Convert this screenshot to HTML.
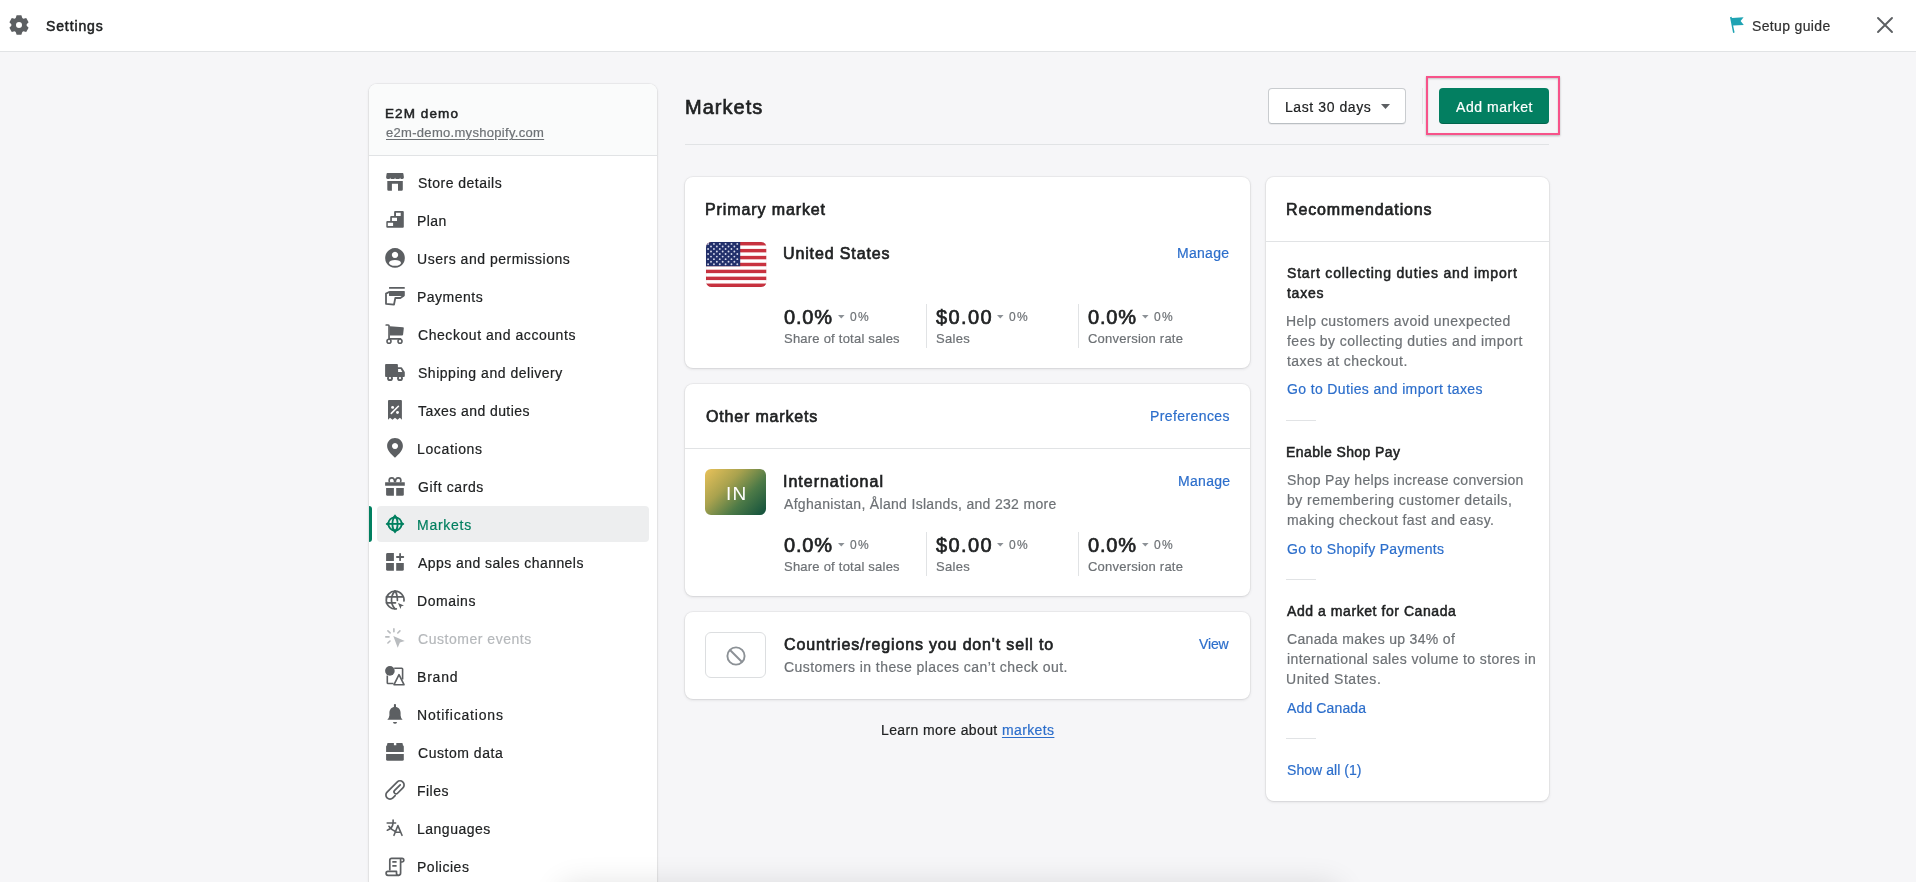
<!DOCTYPE html>
<html><head><meta charset="utf-8"><title>Settings - Markets</title>
<style>
html,body{margin:0;padding:0}
body{width:1916px;height:882px;overflow:hidden;position:relative;background:#f6f6f8;font-family:"Liberation Sans",sans-serif;color:#202223}
.t{position:absolute;will-change:transform;white-space:nowrap;line-height:40px;font-family:"Liberation Sans",sans-serif}
svg{position:absolute;overflow:visible}
.card{position:absolute;background:#fff;border-radius:8px;box-shadow:0 0 0 1px rgba(63,63,68,0.05),0 1px 3px 0 rgba(63,63,68,0.15)}
</style></head><body>
<div style="position:absolute;left:0px;top:0px;width:1916px;height:51px;background:#fff"></div>
<div style="position:absolute;left:0px;top:51px;width:1916px;height:1px;background:#e1e3e5"></div>
<svg style="left:9.3px;top:15px" width="20" height="20" viewBox="0 0 20 20"><path fill="#5c5f62" fill-rule="evenodd" d="M13.29 3.04 L12.38 0.29 L7.62 0.29 L6.71 3.04 L5.62 3.67 L2.78 3.08 L0.40 7.20 L2.33 9.37 L2.33 10.63 L0.40 12.80 L2.78 16.92 L5.62 16.33 L6.71 16.96 L7.62 19.71 L12.38 19.71 L13.29 16.96 L14.38 16.33 L17.22 16.92 L19.60 12.80 L17.67 10.63 L17.67 9.37 L19.60 7.20 L17.22 3.08 L14.38 3.67 Z M13.0 10 A3.0 3.0 0 1 0 7.0 10 A3.0 3.0 0 1 0 13.0 10 Z"/></svg>
<div class="t" style="left:45.70px;top:6px;font-size:14px;font-weight:normal;color:#202223;letter-spacing:0.873px;-webkit-text-stroke:0.50px #202223;">Settings</div>
<svg style="left:1729px;top:16px" width="16" height="18" viewBox="0 0 16 18"><path fill="#1ea3b3" d="M1 1.2 L2.6 0.8 L2.9 2 L14.6 1.2 L11.6 5 L14.8 9 L4.1 9.6 L5.6 16.6 L4.1 16.9 Z"/></svg>
<div class="t" style="left:1752.20px;top:6px;font-size:14px;font-weight:normal;color:#303030;letter-spacing:0.346px;-webkit-text-stroke:0.20px #303030;">Setup guide</div>
<svg style="left:1877px;top:17px" width="16" height="16" viewBox="0 0 16 16"><path d="M1 1 L15 15 M15 1 L1 15" stroke="#5c5f62" stroke-width="1.9" stroke-linecap="round"/></svg>
<div class="card" style="left:369px;top:84px;width:288px;height:830px;border-radius:8px"></div>
<div style="position:absolute;left:369px;top:84px;width:288px;height:71px;background:#fafbfb;border-radius:8px 8px 0 0"></div>
<div style="position:absolute;left:369px;top:155px;width:288px;height:1px;background:#e1e3e5"></div>
<div class="t" style="left:384.60px;top:94px;font-size:13.5px;font-weight:normal;color:#202223;letter-spacing:1.090px;-webkit-text-stroke:0.50px #202223;">E2M demo</div>
<div class="t" style="left:385.60px;top:113px;font-size:13px;font-weight:normal;color:#6d7175;letter-spacing:0.303px;-webkit-text-stroke:0.20px #6d7175;text-decoration:underline;text-underline-offset:2px">e2m-demo.myshopify.com</div>
<div style="position:absolute;left:377px;top:506px;width:272px;height:36px;background:#edeeef;border-radius:4px"></div>
<div style="position:absolute;left:369px;top:506px;width:3px;height:36px;background:#007f5f;border-radius:0 3px 3px 0"></div>
<div class="t" style="left:417.70px;top:163px;font-size:14px;font-weight:normal;color:#202223;letter-spacing:0.490px;-webkit-text-stroke:0.20px #202223;">Store details</div>
<svg style="left:385px;top:172px" width="20" height="20" viewBox="0 0 20 20"><g fill="#5c5f62"><path d="M2.3 1.1 H17.7 Q18.3 1.1 18.4 1.7 L18.9 5.2 Q18.9 6.9 17.5 6.9 H16.4 Q15.1 6.9 15.1 5.4 Q15.1 6.9 13.7 6.9 H11.4 Q10.05 6.9 10.05 5.4 Q10.05 6.9 8.7 6.9 H6.5 Q5.2 6.9 5.2 5.4 Q5.2 6.9 3.8 6.9 H2.5 Q1.1 6.9 1.1 5.2 L1.6 1.7 Q1.7 1.1 2.3 1.1 Z"/><path d="M2.3 9.1 H17.8 V17.6 Q17.8 18.8 16.6 18.8 H13 V11.8 H6.9 V18.8 H3.5 Q2.3 18.8 2.3 17.6 Z"/></g></svg>
<div class="t" style="left:416.70px;top:201px;font-size:14px;font-weight:normal;color:#202223;letter-spacing:0.422px;-webkit-text-stroke:0.20px #202223;">Plan</div>
<svg style="left:385px;top:210px" width="20" height="20" viewBox="0 0 20 20"><path fill="#5c5f62" fill-rule="evenodd" d="M10.1 1.1 H17.8 Q18.8 1.1 18.8 2.1 V16.8 Q18.8 17.8 17.8 17.8 H2.3 Q1.3 17.8 1.3 16.8 V12.1 Q1.3 11.1 2.3 11.1 H5.2 V7 Q5.2 6 6.2 6 H9.1 V2.1 Q9.1 1.1 10.1 1.1 Z M11 2.8 V6 H15.7 V2.8 Z M6.9 7.7 V11 H12 V7.7 Z M2.8 12.8 V16.1 H8.1 V12.8 Z"/></svg>
<div class="t" style="left:416.70px;top:239px;font-size:14px;font-weight:normal;color:#202223;letter-spacing:0.521px;-webkit-text-stroke:0.20px #202223;">Users and permissions</div>
<svg style="left:385px;top:248px" width="20" height="20" viewBox="0 0 20 20"><path fill="#5c5f62" fill-rule="evenodd" d="M10 0.1 A9.85 9.85 0 1 1 9.99 0.1 Z M10 3.8 A3.1 3.1 0 1 0 10.01 3.8 Z M4 14.9 A6 2.9 0 1 0 16 14.9 A6 2.9 0 1 0 4 14.9 Z"/></svg>
<div class="t" style="left:416.70px;top:277px;font-size:14px;font-weight:normal;color:#202223;letter-spacing:0.493px;-webkit-text-stroke:0.20px #202223;">Payments</div>
<svg style="left:385px;top:286px" width="20" height="20" viewBox="0 0 20 20"><g fill="#5c5f62"><rect x="4" y="1.1" width="15.8" height="1.7" rx="0.5"/><rect x="4" y="5" width="15.8" height="4.9" rx="0.4"/></g><path d="M4.6 5.8 L1 7.6 V17.8 L9 18.7 L10.3 12 H15.4 L19 9.6" fill="none" stroke="#5c5f62" stroke-width="1.8" stroke-linejoin="round"/></svg>
<div class="t" style="left:417.70px;top:315px;font-size:14px;font-weight:normal;color:#202223;letter-spacing:0.554px;-webkit-text-stroke:0.20px #202223;">Checkout and accounts</div>
<svg style="left:385px;top:324px" width="20" height="20" viewBox="0 0 20 20"><g fill="#5c5f62"><path d="M4.9 2.3 L18 3.2 Q18.9 3.3 18.8 4.2 L18.1 10.6 Q18 11.6 17 11.6 H4.9 Z"/></g><path d="M1.2 1 H3.2 Q4.05 1 4.05 1.9 V14.85 H15.5" fill="none" stroke="#5c5f62" stroke-width="1.7" stroke-linecap="round" stroke-linejoin="round"/><circle cx="4" cy="17.2" r="2" fill="none" stroke="#5c5f62" stroke-width="1.6"/><circle cx="15" cy="17.2" r="2" fill="none" stroke="#5c5f62" stroke-width="1.6"/></svg>
<div class="t" style="left:417.70px;top:353px;font-size:14px;font-weight:normal;color:#202223;letter-spacing:0.522px;-webkit-text-stroke:0.20px #202223;">Shipping and delivery</div>
<svg style="left:385px;top:362px" width="20" height="20" viewBox="0 0 20 20"><path fill="#5c5f62" fill-rule="evenodd" d="M1 2.1 H12 Q12.9 2.1 12.9 3 V5.2 H16.3 Q16.8 5.2 17.1 5.7 L19.6 9.8 Q19.8 10.1 19.8 10.5 V14.1 Q19.8 15 18.9 15 H1 Q0.1 15 0.1 14.1 V3 Q0.1 2.1 1 2.1 Z M13.1 6.9 V10.1 H17.3 L15.7 6.9 Z"/><circle cx="5" cy="16.2" r="2.9" fill="#5c5f62"/><circle cx="15" cy="16.2" r="2.9" fill="#5c5f62"/><circle cx="5" cy="16.1" r="1.15" fill="#fff"/><circle cx="15" cy="16.1" r="1.15" fill="#fff"/></svg>
<div class="t" style="left:417.70px;top:391px;font-size:14px;font-weight:normal;color:#202223;letter-spacing:0.422px;-webkit-text-stroke:0.20px #202223;">Taxes and duties</div>
<svg style="left:385px;top:400px" width="20" height="20" viewBox="0 0 20 20"><path fill="#5c5f62" d="M4 0.1 H15.9 Q16.9 0.1 16.9 1.1 V19.8 L14.9 17.8 L12.5 19.8 L10 17.8 L7.5 19.8 L5 17.8 L3 19.8 V1.1 Q3 0.1 4 0.1 Z"/><g fill="#fff"><circle cx="7.6" cy="7.4" r="1.45"/><circle cx="12.5" cy="12.5" r="1.45"/></g><path d="M13.4 6.3 L6.3 13.4" stroke="#fff" stroke-width="1.6" stroke-linecap="round"/></svg>
<div class="t" style="left:416.70px;top:429px;font-size:14px;font-weight:normal;color:#202223;letter-spacing:0.634px;-webkit-text-stroke:0.20px #202223;">Locations</div>
<svg style="left:385px;top:438px" width="20" height="20" viewBox="0 0 20 20"><path fill="#5c5f62" fill-rule="evenodd" d="M10 0.1 C14.4 0.1 17.9 3.6 17.9 8 C17.9 12.3 14.3 15.8 10 19.8 C5.7 15.8 2.1 12.3 2.1 8 C2.1 3.6 5.6 0.1 10 0.1 Z M10 4.9 A3.05 3.05 0 1 0 10.01 4.9 Z"/></svg>
<div class="t" style="left:417.70px;top:467px;font-size:14px;font-weight:normal;color:#202223;letter-spacing:0.600px;-webkit-text-stroke:0.20px #202223;">Gift cards</div>
<svg style="left:385px;top:476px" width="20" height="20" viewBox="0 0 20 20"><g fill="#5c5f62"><rect x="0.1" y="6.2" width="19.7" height="3.6" rx="0.3"/><path d="M1.1 12 H8.9 V19.8 H2.4 Q1.1 19.8 1.1 18.5 Z"/><path d="M11.2 12 H18.8 V18.5 Q18.8 19.8 17.5 19.8 H11.2 Z"/></g><path d="M9.6 6.2 C9.6 3 8.4 1.9 6.8 1.9 C5.2 1.9 4.1 3 4.1 4.5 C4.1 5.4 4.4 6 4.6 6.4 M10.4 6.2 C10.4 3 11.6 1.9 13.2 1.9 C14.8 1.9 15.9 3 15.9 4.5 C15.9 5.4 15.6 6 15.4 6.4" fill="none" stroke="#5c5f62" stroke-width="1.6"/></svg>
<div class="t" style="left:416.70px;top:505px;font-size:14px;font-weight:normal;color:#007f5f;letter-spacing:0.736px;-webkit-text-stroke:0.20px #007f5f;">Markets</div>
<svg style="left:385px;top:514px" width="20" height="20" viewBox="0 0 20 20"><g fill="none" stroke="#007f5f" stroke-width="1.8"><circle cx="10" cy="9.9" r="6.6"/><ellipse cx="10" cy="9.9" rx="2.6" ry="6.6"/><path d="M1.5 9.9 H18.5"/></g><g fill="#007f5f"><path d="M10 0.3 L12.3 3.3 H7.7 Z M10 19.6 L12.3 16.5 H7.7 Z M0.6 9.9 L3.6 7.6 V12.2 Z M19.4 9.9 L16.4 7.6 V12.2 Z"/></g></svg>
<div class="t" style="left:417.70px;top:543px;font-size:14px;font-weight:normal;color:#202223;letter-spacing:0.443px;-webkit-text-stroke:0.20px #202223;">Apps and sales channels</div>
<svg style="left:385px;top:552px" width="20" height="20" viewBox="0 0 20 20"><g fill="#5c5f62"><path d="M2.4 1.1 H8.9 V8.9 H1.1 V2.4 Q1.1 1.1 2.4 1.1 Z"/><path d="M1.1 11.1 H8.9 V18.8 H2.6 Q1.1 18.8 1.1 17.3 Z"/><path d="M11.2 11.1 H18.8 V17.3 Q18.8 18.8 17.3 18.8 H11.2 Z"/></g><path d="M15.1 1.8 V8.2 M11.9 5 H18.3" stroke="#5c5f62" stroke-width="1.8" stroke-linecap="round"/></svg>
<div class="t" style="left:416.70px;top:581px;font-size:14px;font-weight:normal;color:#202223;letter-spacing:0.526px;-webkit-text-stroke:0.20px #202223;">Domains</div>
<svg style="left:385px;top:590px" width="20" height="20" viewBox="0 0 20 20"><g fill="none" stroke="#5c5f62" stroke-width="1.7" stroke-linecap="round"><path d="M19 11 A8.9 8.9 0 1 0 11.3 18.9"/><path d="M1.4 6.9 H18.3 M1.4 12.8 H10.5"/><path d="M10 1.1 C7.6 3.5 6.5 6.5 6.5 10 C6.5 13.5 7.6 16.4 9.8 18.6"/><path d="M10 1.1 C11.7 3 12.4 6 12.4 10.3"/></g><path fill="#5c5f62" d="M13 13 L19 15.5 L16.3 16.3 L15.5 19 Z"/></svg>
<div class="t" style="left:417.70px;top:619px;font-size:14px;font-weight:normal;color:#b5b8bb;letter-spacing:0.527px;-webkit-text-stroke:0.20px #b5b8bb;">Customer events</div>
<svg style="left:385px;top:628px" width="20" height="20" viewBox="0 0 20 20"><g stroke="#b9bcbf" stroke-width="1.6" stroke-linecap="round" fill="none"><path d="M8.9 0.9 V3.8 M2.9 2.9 L5.1 4.9 M14.9 2.9 L12.8 5 M0.8 8.9 H4 M2.9 15 L5 13"/></g><path fill="#b9bcbf" d="M8.3 8.1 L19.8 13 L14.9 14.6 L12.7 19.8 Z"/></svg>
<div class="t" style="left:416.70px;top:657px;font-size:14px;font-weight:normal;color:#202223;letter-spacing:0.807px;-webkit-text-stroke:0.20px #202223;">Brand</div>
<svg style="left:385px;top:666px" width="20" height="20" viewBox="0 0 20 20"><path d="M9.2 2.3 H16.8 Q17.6 2.3 17.6 3.1 V13.6 M8.5 17.5 H3.1 Q2.3 17.5 2.3 16.7 V9.5" fill="none" stroke="#5c5f62" stroke-width="1.6"/><circle cx="4.9" cy="4.9" r="4.8" fill="#5c5f62"/><path d="M14 8.7 L19 18.7 H9 Z" fill="#fff" stroke="#5c5f62" stroke-width="1.6" stroke-linejoin="round"/></svg>
<div class="t" style="left:416.70px;top:695px;font-size:14px;font-weight:normal;color:#202223;letter-spacing:0.804px;-webkit-text-stroke:0.20px #202223;">Notifications</div>
<svg style="left:385px;top:704px" width="20" height="20" viewBox="0 0 20 20"><g fill="#5c5f62"><rect x="8.9" y="0.1" width="2.1" height="3.4" rx="0.8"/><path d="M10 2.9 C13.8 2.9 15.6 5.5 15.6 9 V11.5 Q15.6 13.5 17.6 15.7 H2.3 Q4.3 13.5 4.4 11.5 V9 C4.4 5.5 6.2 2.9 10 2.9 Z"/><path d="M7.9 17.9 H12.1 Q11.6 19.8 10 19.8 Q8.4 19.8 7.9 17.9 Z"/></g></svg>
<div class="t" style="left:417.70px;top:733px;font-size:14px;font-weight:normal;color:#202223;letter-spacing:0.531px;-webkit-text-stroke:0.20px #202223;">Custom data</div>
<svg style="left:385px;top:742px" width="20" height="20" viewBox="0 0 20 20"><g fill="#5c5f62"><path d="M3.1 1.1 H8.9 V3.3 H11.3 V1.1 H16.8 Q17.8 1.1 17.8 2.1 V3.3 Q18.8 3.6 18.8 4.6 V9.9 H1.1 V4.6 Q1.1 3.6 2.1 3.3 V2.1 Q2.1 1.1 3.1 1.1 Z"/><path d="M1.1 12 H18.8 V17.3 Q18.8 18.8 17.3 18.8 H2.6 Q1.1 18.8 1.1 17.3 Z"/></g></svg>
<div class="t" style="left:416.70px;top:771px;font-size:14px;font-weight:normal;color:#202223;letter-spacing:0.460px;-webkit-text-stroke:0.20px #202223;">Files</div>
<svg style="left:385px;top:780px" width="20" height="20" viewBox="0 0 20 20"><path d="M10.14 15.66 L7.9 17.9 A4.1 4.1 0 0 1 2.1 12.1 L12.1 2.1 A4.1 4.1 0 0 1 17.9 7.9 L12.55 13.25 A2.05 2.05 0 0 1 9.65 10.35 L15.2 4.8" fill="none" stroke="#5c5f62" stroke-width="1.7" stroke-linecap="round"/></svg>
<div class="t" style="left:416.70px;top:809px;font-size:14px;font-weight:normal;color:#202223;letter-spacing:0.501px;-webkit-text-stroke:0.20px #202223;">Languages</div>
<svg style="left:385px;top:818px" width="20" height="20" viewBox="0 0 20 20"><g fill="none" stroke="#5c5f62" stroke-width="1.6" stroke-linecap="round" stroke-linejoin="round"><path d="M2.2 4.95 H10.6 M8.1 2.1 V4.9 C7.8 8.5 6 11 2.3 12.2 M3.9 8.3 C5.5 10.5 7.5 12.2 10 13.2"/><path d="M9 17.3 L12.9 7.6 L17 17.3 M10.4 14.3 H15.6"/></g></svg>
<div class="t" style="left:416.70px;top:847px;font-size:14px;font-weight:normal;color:#202223;letter-spacing:0.523px;-webkit-text-stroke:0.20px #202223;">Policies</div>
<svg style="left:385px;top:856px" width="20" height="20" viewBox="0 0 20 20"><g fill="none" stroke="#5c5f62" stroke-width="1.7" stroke-linejoin="round"><path d="M4.8 14.5 V4.3 Q4.8 2.4 6.7 2.4 H17 A1.8 1.8 0 0 1 17 6 H15.5"/><path d="M15.6 2.6 V17 Q15.6 19.3 13.3 19.3"/><path d="M11.5 15.4 H2.9 Q1.1 15.4 1.1 17.3 Q1.1 19.3 3 19.3 H13.3 Q11.5 19.3 11.5 17.3 Z"/><path d="M7.3 5.9 H11.6 M7.3 9.9 H11.6"/></g></svg>
<div class="t" style="left:684.90px;top:87px;font-size:20px;font-weight:normal;color:#202223;letter-spacing:1.013px;-webkit-text-stroke:0.65px #202223;">Markets</div>
<div style="position:absolute;left:685px;top:144px;width:864px;height:1px;background:#e1e3e5"></div>
<div style="position:absolute;left:1268px;top:88px;width:136px;height:34px;background:#fff;border:1px solid #c9cccf;border-bottom-color:#babfc3;border-radius:4px;box-shadow:0 1px 0 rgba(0,0,0,0.05)"></div>
<div class="t" style="left:1285.30px;top:87px;font-size:14px;font-weight:normal;color:#202223;letter-spacing:0.583px;-webkit-text-stroke:0.20px #202223;">Last 30 days</div>
<svg style="left:1381px;top:104px" width="9" height="5" viewBox="0 0 9 5"><path d="M0 0 H9 L4.5 5 Z" fill="#5c5f62"/></svg>
<div style="position:absolute;left:1422px;top:88px;width:1px;height:36px;background:#e4e5e7"></div>
<div style="position:absolute;left:1426px;top:76px;width:130px;height:55px;border:2px solid #f7538a;box-shadow:0 1px 2px rgba(0,0,0,0.25), inset 0 1px 2px rgba(0,0,0,0.2)"></div>
<div style="position:absolute;left:1439px;top:88px;width:110px;height:36px;background:#037f61;border-radius:4px;box-shadow:inset 0 -1px 0 rgba(0,0,0,0.2)"></div>
<div class="t" style="left:1456.30px;top:87px;font-size:14px;font-weight:normal;color:#ffffff;letter-spacing:0.545px;-webkit-text-stroke:0.20px #ffffff;">Add market</div>
<div class="card" style="left:685px;top:177px;width:565px;height:191px"></div>
<div class="t" style="left:704.50px;top:190px;font-size:16px;font-weight:normal;color:#202223;letter-spacing:0.892px;-webkit-text-stroke:0.65px #202223;">Primary market</div>
<svg style="left:705.8px;top:241.7px" width="60.5" height="45" viewBox="0 0 60.5 45"><defs><clipPath id="fc"><rect x="0" y="0" width="60.5" height="45" rx="5.5"/></clipPath></defs><g clip-path="url(#fc)"><rect width="60.5" height="45" fill="#fff"/><rect x="0" y="0.00" width="60.5" height="3.46" fill="#c8323f"/><rect x="0" y="6.92" width="60.5" height="3.46" fill="#c8323f"/><rect x="0" y="13.85" width="60.5" height="3.46" fill="#c8323f"/><rect x="0" y="20.77" width="60.5" height="3.46" fill="#c8323f"/><rect x="0" y="27.69" width="60.5" height="3.46" fill="#c8323f"/><rect x="0" y="34.62" width="60.5" height="3.46" fill="#c8323f"/><rect x="0" y="41.54" width="60.5" height="3.46" fill="#c8323f"/><rect x="0" y="0" width="34.2" height="24.23" fill="#22306b"/><circle cx="2.10" cy="1.90" r="0.95" fill="#d5d8ea"/><circle cx="7.94" cy="1.90" r="0.95" fill="#d5d8ea"/><circle cx="13.78" cy="1.90" r="0.95" fill="#d5d8ea"/><circle cx="19.62" cy="1.90" r="0.95" fill="#d5d8ea"/><circle cx="25.46" cy="1.90" r="0.95" fill="#d5d8ea"/><circle cx="31.30" cy="1.90" r="0.95" fill="#d5d8ea"/><circle cx="5.00" cy="4.44" r="0.95" fill="#d5d8ea"/><circle cx="10.84" cy="4.44" r="0.95" fill="#d5d8ea"/><circle cx="16.68" cy="4.44" r="0.95" fill="#d5d8ea"/><circle cx="22.52" cy="4.44" r="0.95" fill="#d5d8ea"/><circle cx="28.36" cy="4.44" r="0.95" fill="#d5d8ea"/><circle cx="2.10" cy="6.98" r="0.95" fill="#d5d8ea"/><circle cx="7.94" cy="6.98" r="0.95" fill="#d5d8ea"/><circle cx="13.78" cy="6.98" r="0.95" fill="#d5d8ea"/><circle cx="19.62" cy="6.98" r="0.95" fill="#d5d8ea"/><circle cx="25.46" cy="6.98" r="0.95" fill="#d5d8ea"/><circle cx="31.30" cy="6.98" r="0.95" fill="#d5d8ea"/><circle cx="5.00" cy="9.52" r="0.95" fill="#d5d8ea"/><circle cx="10.84" cy="9.52" r="0.95" fill="#d5d8ea"/><circle cx="16.68" cy="9.52" r="0.95" fill="#d5d8ea"/><circle cx="22.52" cy="9.52" r="0.95" fill="#d5d8ea"/><circle cx="28.36" cy="9.52" r="0.95" fill="#d5d8ea"/><circle cx="2.10" cy="12.06" r="0.95" fill="#d5d8ea"/><circle cx="7.94" cy="12.06" r="0.95" fill="#d5d8ea"/><circle cx="13.78" cy="12.06" r="0.95" fill="#d5d8ea"/><circle cx="19.62" cy="12.06" r="0.95" fill="#d5d8ea"/><circle cx="25.46" cy="12.06" r="0.95" fill="#d5d8ea"/><circle cx="31.30" cy="12.06" r="0.95" fill="#d5d8ea"/><circle cx="5.00" cy="14.60" r="0.95" fill="#d5d8ea"/><circle cx="10.84" cy="14.60" r="0.95" fill="#d5d8ea"/><circle cx="16.68" cy="14.60" r="0.95" fill="#d5d8ea"/><circle cx="22.52" cy="14.60" r="0.95" fill="#d5d8ea"/><circle cx="28.36" cy="14.60" r="0.95" fill="#d5d8ea"/><circle cx="2.10" cy="17.14" r="0.95" fill="#d5d8ea"/><circle cx="7.94" cy="17.14" r="0.95" fill="#d5d8ea"/><circle cx="13.78" cy="17.14" r="0.95" fill="#d5d8ea"/><circle cx="19.62" cy="17.14" r="0.95" fill="#d5d8ea"/><circle cx="25.46" cy="17.14" r="0.95" fill="#d5d8ea"/><circle cx="31.30" cy="17.14" r="0.95" fill="#d5d8ea"/><circle cx="5.00" cy="19.68" r="0.95" fill="#d5d8ea"/><circle cx="10.84" cy="19.68" r="0.95" fill="#d5d8ea"/><circle cx="16.68" cy="19.68" r="0.95" fill="#d5d8ea"/><circle cx="22.52" cy="19.68" r="0.95" fill="#d5d8ea"/><circle cx="28.36" cy="19.68" r="0.95" fill="#d5d8ea"/><circle cx="2.10" cy="22.22" r="0.95" fill="#d5d8ea"/><circle cx="7.94" cy="22.22" r="0.95" fill="#d5d8ea"/><circle cx="13.78" cy="22.22" r="0.95" fill="#d5d8ea"/><circle cx="19.62" cy="22.22" r="0.95" fill="#d5d8ea"/><circle cx="25.46" cy="22.22" r="0.95" fill="#d5d8ea"/><circle cx="31.30" cy="22.22" r="0.95" fill="#d5d8ea"/></g><rect x="0.25" y="0.25" width="60.0" height="44.5" rx="5.3" fill="none" stroke="rgba(0,0,0,0.08)" stroke-width="0.5"/></svg>
<div class="t" style="left:782.80px;top:234px;font-size:16px;font-weight:normal;color:#202223;letter-spacing:0.870px;-webkit-text-stroke:0.65px #202223;">United States</div>
<div class="t" style="left:1177.30px;top:233px;font-size:14px;font-weight:normal;color:#2c6ecb;letter-spacing:0.279px;-webkit-text-stroke:0.20px #2c6ecb;">Manage</div>
<div class="t" style="left:783.90px;top:297px;font-size:20px;font-weight:normal;color:#202223;letter-spacing:0.799px;-webkit-text-stroke:0.65px #202223;">0.0%</div>
<svg style="left:837.8px;top:314.5px" width="6.6" height="3.6" viewBox="0 0 6.6 3.6"><path d="M0 0 H6.6 L3.3 3.6 Z" fill="#8c9196"/></svg>
<div class="t" style="left:849.90px;top:297px;font-size:12px;font-weight:normal;color:#6d7175;letter-spacing:1.226px;-webkit-text-stroke:0.20px #6d7175;">0%</div>
<div class="t" style="left:783.90px;top:319px;font-size:13px;font-weight:normal;color:#6d7175;letter-spacing:0.227px;-webkit-text-stroke:0.20px #6d7175;">Share of total sales</div>
<div class="t" style="left:935.70px;top:297px;font-size:20px;font-weight:normal;color:#202223;letter-spacing:1.394px;-webkit-text-stroke:0.65px #202223;">$0.00</div>
<svg style="left:996.8px;top:314.5px" width="6.6" height="3.6" viewBox="0 0 6.6 3.6"><path d="M0 0 H6.6 L3.3 3.6 Z" fill="#8c9196"/></svg>
<div class="t" style="left:1008.60px;top:297px;font-size:12px;font-weight:normal;color:#6d7175;letter-spacing:1.226px;-webkit-text-stroke:0.20px #6d7175;">0%</div>
<div class="t" style="left:935.70px;top:319px;font-size:13px;font-weight:normal;color:#6d7175;letter-spacing:0.302px;-webkit-text-stroke:0.20px #6d7175;">Sales</div>
<div style="position:absolute;left:926px;top:304px;width:1px;height:44px;background:#e1e3e5"></div>
<div class="t" style="left:1087.60px;top:297px;font-size:20px;font-weight:normal;color:#202223;letter-spacing:0.832px;-webkit-text-stroke:0.65px #202223;">0.0%</div>
<svg style="left:1141.5px;top:314.5px" width="6.6" height="3.6" viewBox="0 0 6.6 3.6"><path d="M0 0 H6.6 L3.3 3.6 Z" fill="#8c9196"/></svg>
<div class="t" style="left:1153.80px;top:297px;font-size:12px;font-weight:normal;color:#6d7175;letter-spacing:1.226px;-webkit-text-stroke:0.20px #6d7175;">0%</div>
<div class="t" style="left:1087.60px;top:319px;font-size:13px;font-weight:normal;color:#6d7175;letter-spacing:0.226px;-webkit-text-stroke:0.20px #6d7175;">Conversion rate</div>
<div style="position:absolute;left:1078px;top:304px;width:1px;height:44px;background:#e1e3e5"></div>
<div class="card" style="left:685px;top:384px;width:565px;height:212px"></div>
<div class="t" style="left:706.00px;top:397px;font-size:16px;font-weight:normal;color:#202223;letter-spacing:0.820px;-webkit-text-stroke:0.65px #202223;">Other markets</div>
<div class="t" style="left:1150.30px;top:396px;font-size:14px;font-weight:normal;color:#2c6ecb;letter-spacing:0.402px;-webkit-text-stroke:0.20px #2c6ecb;">Preferences</div>
<div style="position:absolute;left:685px;top:448px;width:565px;height:1px;background:#e1e3e5"></div>
<div style="position:absolute;left:705px;top:469px;width:61px;height:46px;border-radius:6px;background:linear-gradient(135deg,#e9c25a 0%,#a9a24e 35%,#4d7a47 65%,#0f4f3c 100%)"></div>
<div class="t" style="left:725.50px;top:474px;font-size:19px;font-weight:normal;color:#ffffff;letter-spacing:1.221px;">IN</div>
<div class="t" style="left:782.80px;top:462px;font-size:16px;font-weight:normal;color:#202223;letter-spacing:0.991px;-webkit-text-stroke:0.65px #202223;">International</div>
<div class="t" style="left:783.80px;top:484px;font-size:14px;font-weight:normal;color:#6d7175;letter-spacing:0.316px;-webkit-text-stroke:0.20px #6d7175;">Afghanistan, Åland Islands, and 232 more</div>
<div class="t" style="left:1177.50px;top:461px;font-size:14px;font-weight:normal;color:#2c6ecb;letter-spacing:0.299px;-webkit-text-stroke:0.20px #2c6ecb;">Manage</div>
<div class="t" style="left:783.90px;top:525px;font-size:20px;font-weight:normal;color:#202223;letter-spacing:0.799px;-webkit-text-stroke:0.65px #202223;">0.0%</div>
<svg style="left:837.8px;top:542.5px" width="6.6" height="3.6" viewBox="0 0 6.6 3.6"><path d="M0 0 H6.6 L3.3 3.6 Z" fill="#8c9196"/></svg>
<div class="t" style="left:849.90px;top:525px;font-size:12px;font-weight:normal;color:#6d7175;letter-spacing:1.226px;-webkit-text-stroke:0.20px #6d7175;">0%</div>
<div class="t" style="left:783.90px;top:547px;font-size:13px;font-weight:normal;color:#6d7175;letter-spacing:0.227px;-webkit-text-stroke:0.20px #6d7175;">Share of total sales</div>
<div class="t" style="left:935.70px;top:525px;font-size:20px;font-weight:normal;color:#202223;letter-spacing:1.394px;-webkit-text-stroke:0.65px #202223;">$0.00</div>
<svg style="left:996.8px;top:542.5px" width="6.6" height="3.6" viewBox="0 0 6.6 3.6"><path d="M0 0 H6.6 L3.3 3.6 Z" fill="#8c9196"/></svg>
<div class="t" style="left:1008.60px;top:525px;font-size:12px;font-weight:normal;color:#6d7175;letter-spacing:1.226px;-webkit-text-stroke:0.20px #6d7175;">0%</div>
<div class="t" style="left:935.70px;top:547px;font-size:13px;font-weight:normal;color:#6d7175;letter-spacing:0.302px;-webkit-text-stroke:0.20px #6d7175;">Sales</div>
<div style="position:absolute;left:926px;top:532px;width:1px;height:44px;background:#e1e3e5"></div>
<div class="t" style="left:1087.60px;top:525px;font-size:20px;font-weight:normal;color:#202223;letter-spacing:0.832px;-webkit-text-stroke:0.65px #202223;">0.0%</div>
<svg style="left:1141.5px;top:542.5px" width="6.6" height="3.6" viewBox="0 0 6.6 3.6"><path d="M0 0 H6.6 L3.3 3.6 Z" fill="#8c9196"/></svg>
<div class="t" style="left:1153.80px;top:525px;font-size:12px;font-weight:normal;color:#6d7175;letter-spacing:1.226px;-webkit-text-stroke:0.20px #6d7175;">0%</div>
<div class="t" style="left:1087.60px;top:547px;font-size:13px;font-weight:normal;color:#6d7175;letter-spacing:0.226px;-webkit-text-stroke:0.20px #6d7175;">Conversion rate</div>
<div style="position:absolute;left:1078px;top:532px;width:1px;height:44px;background:#e1e3e5"></div>
<div class="card" style="left:685px;top:612px;width:565px;height:87px"></div>
<div style="position:absolute;left:705px;top:632px;width:59px;height:44px;border:1px solid #dcdee0;border-radius:6px;background:#fff"></div>
<svg style="left:725px;top:645px" width="22" height="22" viewBox="0 0 22 22"><circle cx="11" cy="11" r="8.6" fill="none" stroke="#8c9196" stroke-width="1.9"/><path d="M5 5 L17 17" stroke="#8c9196" stroke-width="1.9"/></svg>
<div class="t" style="left:783.80px;top:625px;font-size:16px;font-weight:normal;color:#202223;letter-spacing:0.843px;-webkit-text-stroke:0.65px #202223;">Countries/regions you don't sell to</div>
<div class="t" style="left:783.80px;top:647px;font-size:14px;font-weight:normal;color:#6d7175;letter-spacing:0.423px;-webkit-text-stroke:0.20px #6d7175;">Customers in these places can’t check out.</div>
<div class="t" style="left:1199.20px;top:624px;font-size:14px;font-weight:normal;color:#2c6ecb;letter-spacing:-0.127px;-webkit-text-stroke:0.20px #2c6ecb;">View</div>
<div class="t" style="left:880.70px;top:710px;font-size:14px;font-weight:normal;color:#202223;letter-spacing:0.383px;-webkit-text-stroke:0.20px #202223;">Learn more about <span style="color:#2c6ecb;-webkit-text-stroke:0.2px #2c6ecb;text-decoration:underline;text-decoration-color:#2c6ecb;text-underline-offset:2px">markets</span></div>
<div class="card" style="left:1266px;top:177px;width:283px;height:624px"></div>
<div class="t" style="left:1286.10px;top:190px;font-size:16px;font-weight:normal;color:#202223;letter-spacing:0.872px;-webkit-text-stroke:0.65px #202223;">Recommendations</div>
<div style="position:absolute;left:1266px;top:241px;width:283px;height:1px;background:#e1e3e5"></div>
<div class="t" style="left:1286.80px;top:253px;font-size:14px;font-weight:normal;color:#202223;letter-spacing:0.812px;-webkit-text-stroke:0.50px #202223;">Start collecting duties and import</div>
<div class="t" style="left:1286.80px;top:273px;font-size:14px;font-weight:normal;color:#202223;letter-spacing:0.735px;-webkit-text-stroke:0.50px #202223;">taxes</div>
<div class="t" style="left:1285.80px;top:301px;font-size:14px;font-weight:normal;color:#6d7175;letter-spacing:0.446px;-webkit-text-stroke:0.20px #6d7175;">Help customers avoid unexpected</div>
<div class="t" style="left:1286.80px;top:321px;font-size:14px;font-weight:normal;color:#6d7175;letter-spacing:0.475px;-webkit-text-stroke:0.20px #6d7175;">fees by collecting duties and import</div>
<div class="t" style="left:1286.80px;top:341px;font-size:14px;font-weight:normal;color:#6d7175;letter-spacing:0.438px;-webkit-text-stroke:0.20px #6d7175;">taxes at checkout.</div>
<div class="t" style="left:1286.80px;top:369px;font-size:14px;font-weight:normal;color:#2c6ecb;letter-spacing:0.364px;-webkit-text-stroke:0.20px #2c6ecb;">Go to Duties and import taxes</div>
<div style="position:absolute;left:1286px;top:420px;width:30px;height:1px;background:#e1e3e5"></div>
<div class="t" style="left:1285.80px;top:432px;font-size:14px;font-weight:normal;color:#202223;letter-spacing:0.415px;-webkit-text-stroke:0.50px #202223;">Enable Shop Pay</div>
<div class="t" style="left:1286.80px;top:460px;font-size:14px;font-weight:normal;color:#6d7175;letter-spacing:0.301px;-webkit-text-stroke:0.20px #6d7175;">Shop Pay helps increase conversion</div>
<div class="t" style="left:1286.80px;top:480px;font-size:14px;font-weight:normal;color:#6d7175;letter-spacing:0.453px;-webkit-text-stroke:0.20px #6d7175;">by remembering customer details,</div>
<div class="t" style="left:1286.80px;top:500px;font-size:14px;font-weight:normal;color:#6d7175;letter-spacing:0.408px;-webkit-text-stroke:0.20px #6d7175;">making checkout fast and easy.</div>
<div class="t" style="left:1286.80px;top:529px;font-size:14px;font-weight:normal;color:#2c6ecb;letter-spacing:0.287px;-webkit-text-stroke:0.20px #2c6ecb;">Go to Shopify Payments</div>
<div style="position:absolute;left:1286px;top:579px;width:30px;height:1px;background:#e1e3e5"></div>
<div class="t" style="left:1286.80px;top:591px;font-size:14px;font-weight:normal;color:#202223;letter-spacing:0.562px;-webkit-text-stroke:0.50px #202223;">Add a market for Canada</div>
<div class="t" style="left:1286.80px;top:619px;font-size:14px;font-weight:normal;color:#6d7175;letter-spacing:0.318px;-webkit-text-stroke:0.20px #6d7175;">Canada makes up 34% of</div>
<div class="t" style="left:1286.80px;top:639px;font-size:14px;font-weight:normal;color:#6d7175;letter-spacing:0.383px;-webkit-text-stroke:0.20px #6d7175;">international sales volume to stores in</div>
<div class="t" style="left:1285.80px;top:659px;font-size:14px;font-weight:normal;color:#6d7175;letter-spacing:0.527px;-webkit-text-stroke:0.20px #6d7175;">United States.</div>
<div class="t" style="left:1286.80px;top:688px;font-size:14px;font-weight:normal;color:#2c6ecb;letter-spacing:0.138px;-webkit-text-stroke:0.20px #2c6ecb;">Add Canada</div>
<div style="position:absolute;left:1286px;top:738px;width:30px;height:1px;background:#e1e3e5"></div>
<div class="t" style="left:1286.80px;top:750px;font-size:14px;font-weight:normal;color:#2c6ecb;letter-spacing:0.050px;-webkit-text-stroke:0.20px #2c6ecb;">Show all (1)</div>
<div style="position:absolute;left:560px;top:890px;width:780px;height:40px;border-radius:12px;box-shadow:0 -6px 30px rgba(0,0,0,0.12)"></div>
</body></html>
